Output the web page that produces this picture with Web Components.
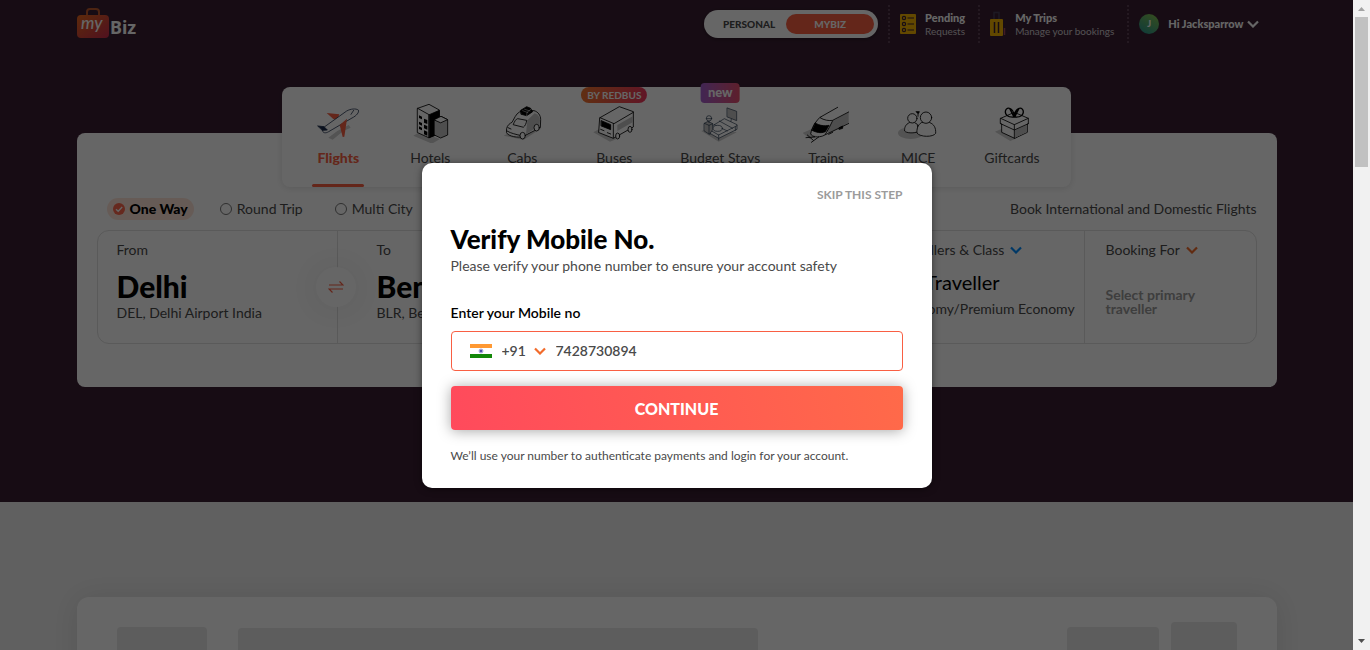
<!DOCTYPE html>
<html lang="en">
<head>
<meta charset="utf-8">
<title>myBiz – Verify Mobile No.</title>
<style>
  html, body { margin: 0; height: 100%; }
  body { font: 14px/20px Lato, "Open Sans", sans-serif; color: #4a4a4a; overflow: hidden; }
</style>
</head>
<body>
<mybiz-app></mybiz-app>

<script>
const define = (name, html) => {
  const template = document.createElement('template');
  template.innerHTML = '<style>*{box-sizing:border-box}</style>' + html;
  customElements.define(name, class extends HTMLElement {
    constructor() {
      super();
      this.attachShadow({ mode: 'open' }).append(template.content.cloneNode(true));
    }
  });
};

define('chevron-icon', `
<style>:host{display:block;width:12px;height:8px;color:#f26b2b} svg{display:block;width:100%;height:100%}</style>
<svg viewBox="0 0 12 8" fill="none" stroke="currentColor" stroke-width="2.2"><path d="M1 1.500 6 6.500 11 1.500"/></svg>`);

define('biz-logo', `
<style>
  :host{display:block;width:62px;height:32px}
  svg{display:block}
  .my{font:italic 500 17px Lato,sans-serif}
  .biz{font:700 18px "Noto Sans",sans-serif}
</style>
<svg width="62" height="32" viewBox="0 0 62 32" role="img" aria-label="myBiz">
  <defs><linearGradient id="g" x1="0" y1="0" x2="1" y2="1"><stop offset="0" stop-color="#e8691d"/><stop offset="1" stop-color="#c92b4d"/></linearGradient></defs>
  <path d="M10 9V5a3 3 0 0 1 3-3h6a3 3 0 0 1 3 3v4" fill="none" stroke="#c05a2d" stroke-width="2"/>
  <rect x="0" y="8" width="32" height="23" rx="4" fill="url(#g)"/>
  <text class="my" x="4" y="22" fill="#fff">my</text>
  <text class="biz" x="33" y="27" fill="#fff">Biz</text>
</svg>`);

define('account-toggle', `
<style>
  :host{display:flex;align-items:center;width:174px;height:28px;padding:4px;border-radius:14px;background:#fff;box-shadow:0 1px 4px rgba(0,0,0,.4)}
  button{flex:1;height:20px;border:0;border-radius:10px;background:none;padding:0 0 0 4px;font:900 10px/20px Lato,sans-serif;color:#4a4a4a}
  button[aria-pressed=true]{flex:0 0 88px;padding:0;background:#f95f43;color:#fff}
</style>
<button type="button" aria-pressed="false">PERSONAL</button><button type="button" aria-pressed="true">MYBIZ</button>`);

define('header-link', `
<style>
  :host{display:block}
  a{display:flex;align-items:center;height:38px;padding:0 13px 0 10px;border-left:2px dotted #5a3f54;color:#fff;text-decoration:none;font-size:11px;line-height:13px}
  .icon{width:16px;height:26px;margin-right:9px}
  b{display:block;font-weight:900} .sub{font-size:10px;color:#d0cbd0}
</style>
<a href="#"><span class="icon"><slot name="icon"></slot></span><span><b><slot name="title"></slot></b><span class="sub"><slot></slot></span></span></a>`);

define('user-menu', `
<style>
  :host{display:block}
  button{display:flex;align-items:center;height:38px;padding:0 18px 0 10px;border:0;border-left:2px dotted #5a3f54;background:none;color:#fff;font:900 11px/20px Lato,sans-serif}
  .avatar{width:20px;height:20px;margin-right:9px;border-radius:50%;background:linear-gradient(30deg,#219393,#8bc34a);font-size:9px}
  chevron-icon{color:#fff;margin-left:3px}
</style>
<button type="button"><span class="avatar">J</span><slot></slot><chevron-icon></chevron-icon></button>`);

define('biz-header', `
<style>
  :host{display:flex;justify-content:space-between;height:48px;padding-top:7px}
  nav{display:flex;margin-top:-2px}
  account-toggle{margin:5px 10px 0 0}
</style>
<biz-logo></biz-logo>
<nav>
  <account-toggle></account-toggle>
  <header-link>
    <svg slot="icon" width="16" height="26" viewBox="0 0 16 26"><rect y="3" width="16" height="20" rx="1" fill="#f5b400"/><g fill="none" stroke="#3a1f33" stroke-width="1.2"><circle cx="4" cy="7" r="1.6"/><circle cx="4" cy="13" r="1.6"/><circle cx="4" cy="19" r="1.6"/><path d="M7.500 7H14M7.500 13H14M7.500 19H14"/></g></svg>
    <span slot="title">Pending</span>Requests
  </header-link>
  <header-link>
    <svg slot="icon" width="16" height="26" viewBox="0 0 16 26"><path d="M4 8V1.500h5V8" fill="none" stroke="#4a4058" stroke-width="1.500"/><rect y="8" width="13" height="17" rx="1" fill="#f5b400"/><path d="M4.500 11v11M8.500 11v11" stroke="#3a1f33" stroke-width="1.500"/><path d="M14.500 17v7" stroke="#a04a5a" stroke-width="1.500"/></svg>
    <span slot="title">My Trips</span>Manage your bookings
  </header-link>
  <user-menu>Hi Jacksparrow</user-menu>
</nav>`);

define('product-tab', `
<style>
  :host{display:block;position:relative;min-width:52px;color:#4a4a4a}
  a{display:flex;flex-direction:column;align-items:center;height:100px;padding-top:16px;color:inherit;text-decoration:none;white-space:nowrap}
  .icon{height:40px;margin-bottom:5px}
  :host([active]){color:#f95f43}
  :host([active]) a{font-weight:900}
  .bar{width:52px;height:3px;margin-top:16px;border-radius:2px}
  :host([active]) .bar{background:#f95f43}
  ::slotted([slot=badge]){position:absolute;left:50%;transform:translateX(-50%);white-space:nowrap;color:#fff}
</style>
<a href="#"><span class="icon"><slot name="icon"></slot></span><slot></slot><span class="bar"></span></a><slot name="badge"></slot>`);

define('product-tabs', `
<style>
  :host{display:flex;gap:40px;width:max-content;height:100px;margin:0 auto;padding:0 31px 0 30px;border-radius:8px;background:#fff;box-shadow:0 1px 7px rgba(0,0,0,.12);position:relative;z-index:1}
  svg{display:block;width:46px;height:40px;fill:none;stroke:#000;stroke-width:2.5;stroke-linejoin:round;stroke-linecap:round}
  .sh{fill:#cfcfcf;stroke:none} .w{fill:#fff} .k{fill:#000} .g{fill:#c4c4c4}
  .redbus{top:0;padding:0 6px;height:16px;border-radius:8px;background:linear-gradient(100deg,#f0772c,#f0355f);font:700 10px/17px Lato,sans-serif}
  .new{top:-4px;padding:0 7px;height:20px;border-radius:4px;background:linear-gradient(90deg,#a45fd0,#e8506e);font:900 13px/19px Lato,sans-serif}
</style>
<product-tab active>
  <svg slot="icon" viewBox="105 84 138 120"><path class="sh" d="M145 188 172 168 206 150 212 158 190 168 158 194Z"/><path d="M140 114 178 118 172 134 160 132Z" fill="#f95f43" stroke="none"/><path class="w" stroke="#2b3a55" d="M130 158 200 108C212 101 228 100 235 105 238 112 230 122 216 129L146 170C136 176 128 174 127 166Z"/><path d="M201 131 179 150 188 186 193 185Z" fill="#f95f43" stroke="none"/><path d="M213 118 221 106" stroke="#2b3a55"/><path d="M114 153 132 155 142 165 128 166Z" fill="#1b2c4c" stroke="#1b2c4c"/></svg>Flights
</product-tab>
<product-tab>
  <svg slot="icon" viewBox="381 84 138 120"><path class="sh" d="M400 182 420 170 480 192 456 206Z"/><path class="w" d="M413 100 447 88 478 105 478 175 446 188 413 173Z"/><path class="k" d="M448 119 478 106V176L448 188Z"/><path d="M413 100 447 119V188"/><path class="k" stroke="none" style="stroke:none" d="M432 131l10 4v12l-10-4zM432 149l10 4v11l-10-4zM432 166l10 4v12l-10-4zM417 140l9 4v8l-9-4zM417 154l9 4v8l-9-4zM417 121l9 4v8l-9-4z"/><path class="g" d="M463 134 483 124 503 134V180L482 189 463 180Z"/><path class="w" d="M463 134 483 124 503 134 483 143Z"/></svg>Hotels
</product-tab>
<product-tab>
  <svg slot="icon" viewBox="657 84 138 120"><path class="sh" d="M671 182 690 172 785 160 730 195Z"/><path class="w" d="M680 160C682 150 690 145 696 142L706 124C712 113 722 107 736 106L762 107C774 110 782 121 782 134L781 158 730 184C716 190 684 184 680 174Z"/><path class="g" style="stroke:none" d="M742 136 764 115C774 118 780 126 780 136L778 152 738 178Z"/><path class="w" d="M700 148C704 138 708 132 713 131L740 136C739 146 735 153 731 156Z"/><path class="k" d="M722 106 740 95 752 100 758 110 740 122 724 118Z"/><path stroke="#fff" style="stroke-width:1.5" d="M728 107 744 113M734 103 750 108M740 122 741 112 754 102"/><path d="M681 168C695 176 708 178 720 181M684 158 693 162"/><ellipse class="w" cx="728" cy="182" rx="8" ry="10"/><ellipse class="w" cx="770" cy="158" rx="8" ry="10"/></svg>Cabs
</product-tab>
<product-tab>
  <svg slot="icon" viewBox="933 84 138 120"><path class="sh" d="M940 172 962 160 1010 192 990 200Z"/><path class="w" d="M960 128 1018 95 1060 110V156L1000 190 957 173Z"/><path d="M960 128 1002 146 1060 112M1000 146V188"/><path class="g" style="stroke:none" d="M1012 150 1058 124V142L1012 168Z"/><path class="k" d="M964 137 992 149V164L964 153Z"/><path d="M962 163 972 167M982 173 992 177"/><ellipse class="w" cx="1013" cy="183" rx="6" ry="9"/><ellipse class="w" cx="1050" cy="163" rx="6" ry="9"/></svg>Buses
  <span slot="badge" class="redbus">BY REDBUS</span>
</product-tab>
<product-tab>
  <svg slot="icon" viewBox="81 84 138 120" style="stroke:#26384d;stroke-width:2"><path class="sh" d="M94 168 120 158 200 172 146 200Z"/><path class="g" d="M172 99 200 109V137L172 126ZM184 132 182 142"/><path class="w" d="M118 158 163 131 201 149V163L146 190 118 174Z"/><path d="M118 164 146 180 201 152M146 180V195M196 156V166M120 166V178M148 138 188 160M133 149 172 168"/><ellipse class="w" cx="143" cy="160" rx="14" ry="9"/><path class="g" d="M103 145 114 139 128 146V164L118 178 103 168Z"/><path d="M103 145 117 151 128 146M117 151V176M117 136V143"/><ellipse class="w" cx="117" cy="130" rx="8" ry="8"/><path d="M109 131H125"/></svg>Budget Stays
  <span slot="badge" class="new">new</span>
</product-tab>
<product-tab>
  <svg slot="icon" viewBox="399 84 138 120"><path class="sh" d="M398 174 425 162 440 180 420 192Z"/><path class="w" stroke="none" style="stroke:none" d="M440 135 503 96H537V146L460 186 422 180Z"/><path class="g" style="stroke:none" d="M488 138 536 112V143L478 176 470 168Z"/><path d="M503 97 450 127C436 140 425 160 422 176 426 188 446 187 458 183L537 145M450 128C462 136 478 138 488 136L536 111M488 137C482 150 474 165 466 178"/><path class="k" d="M436 144C448 152 464 154 477 151L466 170C452 176 438 172 426 166Z"/><path class="k" d="M508 158 518 153V160L508 163ZM408 188 434 186M412 180 430 196M424 202 446 186M476 178 488 172"/></svg>Trains
</product-tab>
<product-tab>
  <svg slot="icon" viewBox="675 84 138 120"><ellipse class="sh" cx="722" cy="174" rx="38" ry="18"/><path class="w" d="M718 143C706 148 703 158 704 168 708 174 730 176 744 170L742 148 734 143Z"/><circle class="w" cx="727" cy="130" r="14"/><path class="w" d="M754 143C742 150 740 164 741 174 750 187 790 187 797 175 798 158 792 148 780 143Z"/><circle class="w" cx="768" cy="128" r="17"/><path class="k" d="M739 110H748L745 116 742 114ZM744 118V124"/></svg>MICE
</product-tab>
<product-tab>
  <svg slot="icon" viewBox="958 84 138 120"><path class="sh" d="M976 170 1000 160 1044 188 1022 198Z"/><path class="w" d="M993 130 1034 112 1076 130V146L1073 147V172L1035 190 996 172V147L993 146Z"/><path class="g" style="stroke:none" d="M1036 166 1072 149V171L1036 188Z"/><path d="M993 130 1034 149 1076 130M1034 149V190M993 146 1034 165 1076 146"/><path style="stroke-width:4" d="M1034 126C1014 128 1004 118 1008 106 1012 94 1030 98 1034 122 1038 98 1056 94 1060 106 1064 118 1054 128 1034 126M1020 100 1032 124M1048 100 1036 124"/></svg>Giftcards
</product-tab>`);

define('trip-option', `
<style>
  :host{display:block}
  label{display:flex;align-items:center;gap:5px;height:22px;padding:0 6px;border-radius:11px}
  :host([checked]) label{background:#ffe4d8;color:#000;font-weight:900}
  input{appearance:none;width:12px;height:12px;margin:0;border:1px solid #777;border-radius:50%}
  .tick{display:none;place-items:center;width:12px;height:12px;border-radius:50%;background:#ff664b}
  :host([checked]) .tick{display:grid}
  :host([checked]) input{position:absolute;opacity:0}
</style>
<label><input type="radio"><span class="tick"><svg width="12" height="12" viewBox="0 0 12 12" fill="none" stroke="#fff" stroke-width="1.300"><path d="M3 6.200 5.200 8.300 9.200 4"/></svg></span><slot></slot></label>`);

define('trip-field', `
<style>
  :host{display:block;padding:9px 10px 0 19px;border-right:1px solid #e0e0e0;white-space:nowrap;min-width:0}
  :host(:last-of-type){border-right:0}
  .label{display:flex;align-items:center;gap:5px;height:20px;margin-bottom:10px}
  .value{font:900 30px/32px Lato,sans-serif;height:33px;color:#000}
  :host([compact]) .value{font:400 20px/24px Lato,sans-serif;height:29px}
  :host([placeholder]) .value{font:700 14px/14px Lato,sans-serif;color:#9b9b9b;padding-top:18px;white-space:normal}
</style>
<div class="label"><slot name="label"></slot></div>
<div class="value"><slot name="value"></slot></div>
<slot></slot>`);

define('search-card', `
<style>
  :host{display:block;margin-top:-54px;padding:65px 20px 43px;border-radius:8px;background:#fff}
  .options{display:flex;gap:20px;margin-bottom:10px;padding-left:10px;line-height:22px}
  .note{margin-left:auto}
  .fields{position:relative;display:grid;grid-template-columns:240px 1fr 206px 171px;height:114px;border:1px solid #e0e0e0;border-radius:12px}
  .to{padding-left:39px}
  .last{padding-left:21px;padding-right:30px}
  .swap{position:absolute;left:218px;top:36px;width:40px;height:40px;border:0;padding:0;border-radius:50%;background:#fff;box-shadow:0 1px 36px rgba(0,0,0,.1);display:grid;place-items:center}
  .drop{display:flex;align-items:center;gap:6px;border:0;padding:0;background:none;font:inherit;color:inherit}
  .blue{color:#008cff}
</style>
<div class="options">
  <trip-option checked>One Way</trip-option><trip-option>Round Trip</trip-option><trip-option>Multi City</trip-option>
  <span class="note">Book International and Domestic Flights</span>
</div>
<div class="fields">
  <trip-field><span slot="label">From</span><span slot="value">Delhi</span>DEL, Delhi Airport India</trip-field>
  <trip-field class="to"><span slot="label">To</span><span slot="value">Bengaluru</span>BLR, Bengal</trip-field>
  <trip-field compact><button slot="label" class="drop" type="button">Travellers &amp; Class <chevron-icon class="blue"></chevron-icon></button><span slot="value">01 Traveller</span>Economy/Premium Economy</trip-field>
  <trip-field placeholder class="last"><button slot="label" class="drop" type="button">Booking For <chevron-icon></chevron-icon></button><span slot="value">Select primary traveller</span></trip-field>
  <button class="swap" type="button" aria-label="Swap cities"><svg width="16" height="12" viewBox="0 0 16 12" fill="none" stroke="#f95f43" stroke-width="1.200"><path d="M1 4H15L11.500 .5M15 8H1L4.500 11.500"/></svg></button>
</div>`);

define('offers-skeleton', `
<style>
  :host{display:flex;align-items:center;gap:12px;margin-top:95px;padding:25px 40px;border-radius:12px;background:#fff;box-shadow:0 1px 30px rgba(0,0,0,.1)}
  div{border-radius:4px;background:#e8e8e8;height:56px}
  .a{width:90px;margin-right:19px} .b{width:520px;height:54px} .c{width:92px;margin-left:auto} .d{width:66px;height:66px}
</style>
<div class="a"></div><div class="b"></div><div class="c"></div><div class="d"></div>`);

define('verify-dialog', `
<style>
  :host{display:block;width:510px;padding:22px 29px;border-radius:10px;background:#fff;box-shadow:0 1px 7px rgba(0,0,0,.5)}
  form{display:flex;flex-direction:column}
  .skip{align-self:flex-end;margin-bottom:18px;font-size:12px;font-weight:700;color:#9b9b9b;text-decoration:none}
  h2{margin:0 0 1px;font-size:26px;line-height:32px;font-weight:900;color:#000}
  p{margin:0}
  .label{margin:27px 0 8px;font-weight:600;color:#000}
  .phone{display:flex;align-items:center;height:40px;padding:0 18px;border:1px solid #f95f43;border-radius:4px}
  .flag{margin-right:10px}
  select,input{appearance:none;border:0;padding:0;margin:0;outline:0;background:none;font:600 14px/20px Lato,sans-serif;color:#4a4a4a}
  select{width:26px;margin-right:6px}
  input{flex:1;min-width:0;margin-left:10px}
  .go{height:44px;margin:15px 0 16px;border:0;border-radius:4px;padding:2px 0 0;background:linear-gradient(75deg,#ff4a5c,#ff6a49);box-shadow:0 1px 14px rgba(0,0,0,.35);font:900 16px/20px Lato,sans-serif;color:#fff}
  .note{font-size:12px}
</style>
<form>
  <a class="skip" href="#">SKIP THIS STEP</a>
  <h2>Verify Mobile No.</h2>
  <p>Please verify your phone number to ensure your account safety</p>
  <label class="label" for="mobile">Enter your Mobile no</label>
  <div class="phone">
    <svg class="flag" width="22" height="14" viewBox="0 0 22 14"><path fill="#ff9933" d="M0 0h22v4H0z"/><path fill="#fff" d="M0 4h22v6H0z"/><path fill="#138808" d="M0 10h22v4H0z"/><circle cx="11" cy="7" r="2" fill="#a0a0d4" stroke="#a0a0d4" stroke-width=".8"/><circle cx="11" cy="7" r="1" fill="#33339a"/></svg>
    <select aria-label="Country code"><option>+91</option></select>
    <chevron-icon></chevron-icon>
    <input id="mobile" type="tel" value="7428730894">
  </div>
  <button class="go" type="button">CONTINUE</button>
  <p class="note">We’ll use your number to authenticate payments and login for your account.</p>
</form>`);

define('page-scrollbar', `
<style>
  :host{display:flex;flex-direction:column;width:17px;background:#f1f1f1}
  button{display:block;width:17px;height:17px;border:0;padding:0;background:none}
  .thumb{width:13px;height:23%;margin:0 auto auto;background:#c1c1c1}
  svg{display:block}
</style>
<button type="button" aria-label="Scroll up"><svg width="17" height="17"><path d="M5 11h7L8.500 7Z" fill="#a3a3a3"/></svg></button>
<div class="thumb"></div>
<button type="button" aria-label="Scroll down"><svg width="17" height="17"><path d="M5 6h7L8.500 10Z" fill="#505050"/></svg></button>`);

define('mybiz-app', `
<style>
  :host{display:grid;grid-template-columns:minmax(0,1fr) 17px;height:100vh}
  main{position:relative;overflow:hidden;background:#f0f0f0}
  .hero{padding-bottom:115px;background:#3b2034}
  .wrap{max-width:1200px;margin:0 auto}
  product-tabs{margin-top:39px}
  .overlay{position:absolute;inset:0;z-index:2;display:grid;place-items:center;background:rgba(0,0,0,.6)}
</style>
<main>
  <div class="hero"><div class="wrap"><biz-header></biz-header><product-tabs></product-tabs><search-card></search-card></div></div>
  <div class="wrap"><offers-skeleton></offers-skeleton></div>
  <div class="overlay"><verify-dialog role="dialog" aria-modal="true" aria-label="Verify Mobile No."></verify-dialog></div>
</main>
<page-scrollbar></page-scrollbar>`);
</script>
</body>
</html>
